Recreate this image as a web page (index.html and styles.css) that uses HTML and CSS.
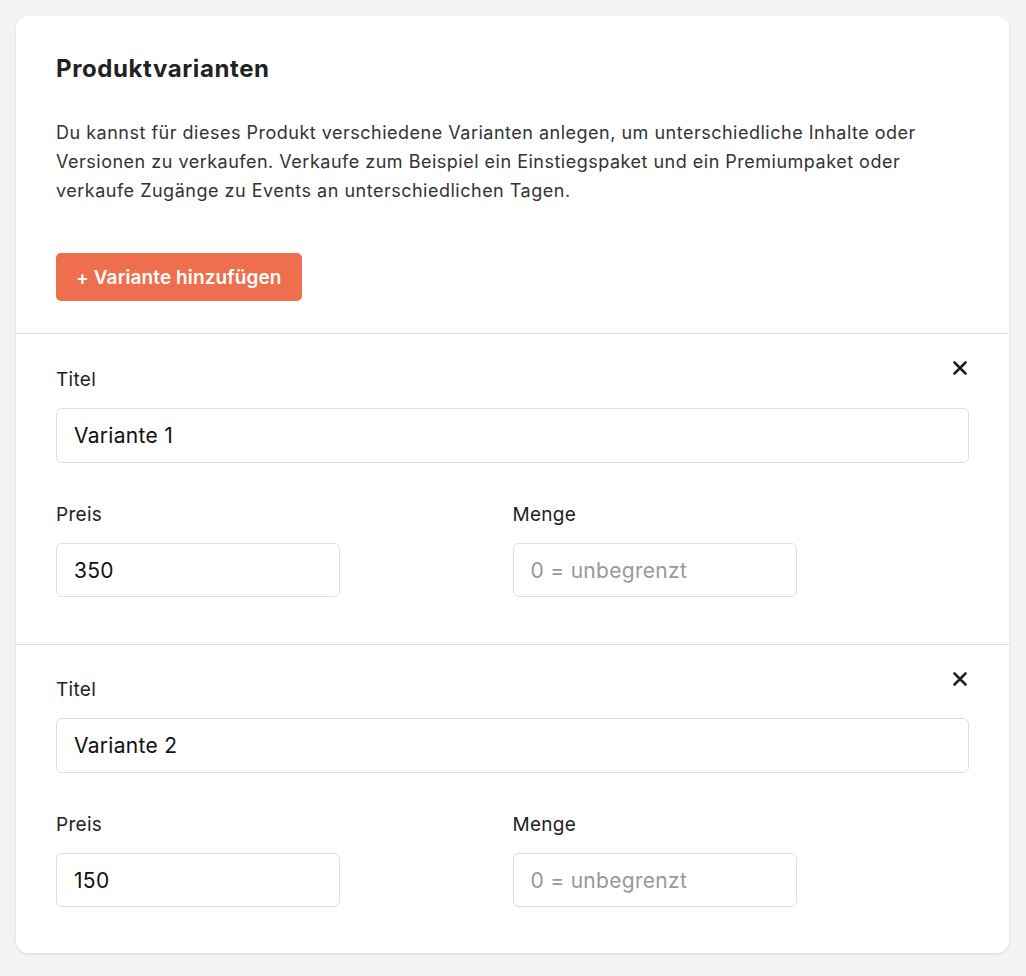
FILE: index.html
```html
<!DOCTYPE html>
<html>
<head>
    <title>Produktvarianten</title>
    <link rel="stylesheet" href="styles.css">
</head>
<body>
    <div class="card">
        <div class="card-head">
            <h2>Produktvarianten</h2>
            <p>Du kannst für dieses Produkt verschiedene Varianten anlegen, um unterschiedliche Inhalte oder Versionen zu verkaufen. Verkaufe zum Beispiel ein Einstiegspaket und ein Premiumpaket oder verkaufe Zugänge zu Events an unterschiedlichen Tagen.</p>
            <button class="add-button" type="button">+ Variante hinzufügen</button>
        </div>

        <div class="variant">
            <button class="remove" type="button" aria-label="Entfernen">
                <svg width="14" height="14" viewBox="0 0 14 14"><path d="M1.5 1.5 L12.5 12.5 M12.5 1.5 L1.5 12.5" stroke="#222" stroke-width="2.6" stroke-linecap="round"/></svg>
            </button>
            <div class="field">
                <label>Titel</label>
                <input class="input" value="Variante 1">
            </div>
            <div class="two-cols">
                <div class="field">
                    <label>Preis</label>
                    <input class="input small" value="350">
                </div>
                <div class="field">
                    <label>Menge</label>
                    <input class="input small" placeholder="0 = unbegrenzt">
                </div>
            </div>
        </div>

        <div class="variant">
            <button class="remove" type="button" aria-label="Entfernen">
                <svg width="14" height="14" viewBox="0 0 14 14"><path d="M1.5 1.5 L12.5 12.5 M12.5 1.5 L1.5 12.5" stroke="#222" stroke-width="2.6" stroke-linecap="round"/></svg>
            </button>
            <div class="field">
                <label>Titel</label>
                <input class="input" value="Variante 2">
            </div>
            <div class="two-cols">
                <div class="field">
                    <label>Preis</label>
                    <input class="input small" value="150">
                </div>
                <div class="field">
                    <label>Menge</label>
                    <input class="input small" placeholder="0 = unbegrenzt">
                </div>
            </div>
        </div>
    </div>
</body>
</html>
```

FILE: styles.css
```css
* {
    padding: 0;
    margin: 0;
    box-sizing: border-box
}

body {
    background-color: #f4f4f4;
    font-family: Inter, "Noto Sans", sans-serif;
    color: #222;
    padding: 16px 17px 22px 16px
}

.card {
    background-color: #fff;
    border-radius: 12px;
    box-shadow: 0 1px 3px rgba(0, 0, 0, 0.12)
}

.card-head {
    padding: 38px 40px 32px
}

.card-head h2 {
    font-size: 24px;
    line-height: 30px;
    font-weight: 700;
    letter-spacing: 0.6px;
    color: #222
}

.card-head p {
    margin-top: 34px;
    font-size: 18px;
    line-height: 29px;
    letter-spacing: 0.5px;
    color: #333
}

.add-button {
    margin-top: 48px;
    height: 48px;
    padding: 0 20px;
    border: none;
    border-radius: 5px;
    background-color: #ee6e4d;
    color: #fff;
    font-family: inherit;
    font-size: 19px;
    font-weight: 600;
    letter-spacing: 0.1px;
    cursor: pointer
}

.variant {
    position: relative;
    border-top: 1px solid #ddd;
    padding: 34px 40px 47px
}

.variant:last-child {
    padding-top: 33px;
    padding-bottom: 46px
}

.remove {
    position: absolute;
    top: 27px;
    right: 42px;
    border: none;
    background: none;
    cursor: pointer;
    display: flex
}

.field label {
    display: block;
    font-size: 19px;
    line-height: 24px;
    letter-spacing: 0.3px;
    color: #222
}

.input {
    display: block;
    margin-top: 16px;
    width: 100%;
    height: 55px;
    padding: 0 17px;
    border: 1px solid #ddd;
    border-radius: 6px;
    font-family: inherit;
    font-size: 21px;
    letter-spacing: 0.3px;
    color: #111
}

.input::placeholder {
    color: #999
}

.input:focus {
    outline: none
}

.input.small {
    width: 284px;
    height: 54px
}

.two-cols {
    display: grid;
    grid-template-columns: 1fr 1fr;
    margin-top: 40px
}
```
